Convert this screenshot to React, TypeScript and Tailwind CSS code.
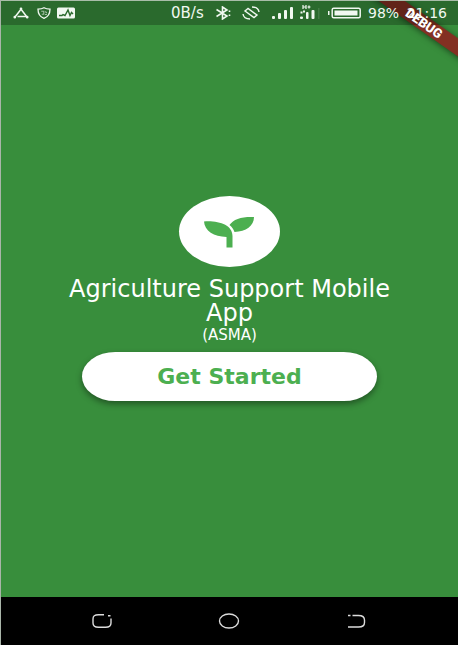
import React from "react";

function StatusBar() {
  return (
    <header className="absolute inset-x-0 top-0 z-10 flex h-[25px] items-center border-t border-[#a9bda9] bg-black/25 pl-3 pr-[11px] text-[14px] leading-4 text-[#f1f8f1]">
      <div className="flex items-center gap-2">
        <svg width="16" height="12" viewBox="0 0 16 12" fill="none" stroke="currentColor" strokeWidth="1.5">
          <path d="M2 10 8 2.2 14 10M4.5 9.6h8.5" />
          <circle cx="8" cy="1.8" r="0.6" fill="currentColor" />
          <circle cx="1.8" cy="10.2" r="0.6" fill="currentColor" />
          <circle cx="14.2" cy="10.2" r="0.6" fill="currentColor" />
        </svg>
        <svg width="14" height="12" viewBox="0 0 14 12" fill="none" stroke="currentColor">
          <path d="M7 .8C5 2 3 2.2 1 2.2c0 4.3 1.3 7.3 6 9.1 4.7-1.8 6-4.8 6-9.1-2 0-4-.2-6-1.4Z" strokeWidth="1.3" />
          <path d="M4.2 4.2h2.6v3H4.8M8.3 4.5l1.5 1.5M8 7.5h2" strokeWidth="1.1" opacity=".6" />
        </svg>
        <svg width="18" height="12" viewBox="0 0 18 12" className="-ml-0.5">
          <rect y="0.5" width="18" height="11" rx="1.5" fill="currentColor" />
          <path d="M2 8.5h3l1-1 2 1L11 3l2 5.500 1.500-3L16 7" fill="none" stroke="#2a6a2d" strokeWidth="1.4" />
        </svg>
      </div>
      <div className="ml-auto flex items-center">
        <span className="w-[44px] text-[15px]">0B/s</span>
        <svg className="mr-[10px]" width="17" height="14" viewBox="0 0 17 14" fill="none" stroke="currentColor" strokeWidth="1.6">
          <path d="M1.5 3.5 12 10 7.500 13V1L12 4 1.500 10.500" />
          <path d="M14.500 4.500v1.500M14.500 8.500V10" />
        </svg>
        <svg className="mr-[12px]" width="18" height="14" viewBox="0 0 18 14" fill="none" stroke="currentColor" strokeWidth="1.4">
          <path d="M6 2.500 3 5l9 6.500L15 9Z" />
          <path d="M10 1C13.500 1 16.500 2.500 17 6M8 13C4.500 13 1.500 11.500 1 8" />
        </svg>
        <svg className="mr-[5px]" width="22" height="14" viewBox="0 0 22 14" fill="currentColor">
          <rect x="0" y="10" width="3" height="3" rx="1" />
          <rect x="6" y="7" width="3" height="6" rx="1" />
          <rect x="12" y="4" width="3" height="9" rx="1" />
          <rect x="18" y="1" width="3" height="12" rx="1" />
        </svg>
        <svg className="mr-[7px]" width="22" height="18" viewBox="0 0 22 18" fill="currentColor">
          <path d="M4 1v4M7 1v4M4 3h3M8.500 3h3M10 1.500v3" stroke="currentColor" strokeWidth="1.2" />
          <rect x="1" y="12.5" width="3" height="2.5" rx="1" />
          <rect x="1.5" y="7.5" width="2" height="2" />
          <rect x="4" y="6.5" width="2" height="2" />
          <rect x="7" y="8" width="2.5" height="7" rx="1" />
          <rect x="12.5" y="6" width="3" height="9" rx="1" />
          <rect x="19" y="4" width="1.5" height="11" opacity=".12" />
        </svg>
        <svg className="mr-[7px]" width="33" height="12" viewBox="0 0 33 12">
          <rect x="0" y="4" width="1.5" height="4" fill="currentColor" />
          <rect x="4.2" y="1.2" width="28" height="9.6" rx="1.5" fill="none" stroke="currentColor" strokeWidth="1.5" />
          <rect x="6.5" y="3.5" width="23" height="5" fill="currentColor" />
        </svg>
        <span className="w-[36px]">98%</span>
        <span className="w-[43px] text-right">21:16</span>
      </div>
    </header>
  );
}

function DebugBanner() {
  return (
    <>
      <div className="absolute right-0 top-0 h-20 w-28 overflow-hidden">
        <div className="absolute -right-[36px] top-[16px] h-[15px] w-[140px] rotate-[35deg] bg-[#833022] shadow-[0_1px_6px_rgba(0,0,0,0.5)]" />
      </div>
      <div className="pointer-events-none absolute right-0 top-0 z-20 h-20 w-28 overflow-hidden">
        <div className="absolute -right-[36px] top-[16px] flex h-[15px] w-[140px] rotate-[35deg] items-center justify-center font-['Roboto',sans-serif] text-[13px] font-black leading-none text-white">
          DEBUG
        </div>
      </div>
    </>
  );
}

function Sprout() {
  return (
    <svg width="52" height="32" viewBox="0 0 52 32" fill="#4caf50">
      <path d="M0 5.500C15 4.500 28.500 9 28.500 20v11.500h-6V21C10 20.500 .5 15 0 5.500Z" />
      <path d="M50 1C38 .5 29.500 3 25.500 9c2.500 2 4 4 5 7C42 15.500 50 10 50 1Z" />
    </svg>
  );
}

function NavBar() {
  return (
    <nav className="flex h-12 items-center justify-center gap-[103px] bg-black pr-[2px] text-[#dcdcdc]">
      <button type="button" aria-label="Recent apps">
        <svg width="24" height="18" viewBox="0 0 24 18" fill="none" stroke="currentColor" strokeWidth="1.4">
          <path d="M14 2.700H8.500C4.500 2.700 3 4.200 3 7v4c0 3 1.500 4.300 5.500 4.300h7c4 0 5.500-1.300 5.500-4.300V6.500M18 3.800h2.500" />
        </svg>
      </button>
      <button type="button" aria-label="Home">
        <svg width="24" height="18" viewBox="0 0 24 18" fill="none" stroke="currentColor" strokeWidth="1.4">
          <ellipse cx="12" cy="9" rx="9.5" ry="7" />
        </svg>
      </button>
      <button type="button" aria-label="Back">
        <svg width="24" height="18" viewBox="0 0 24 18" fill="none" stroke="currentColor" strokeWidth="1.4">
          <path d="M4 3.500h2.500M8.500 3.500h6c4.500 0 6 1.500 6 4.500v2.500c0 3-1.500 4.500-6 4.500H4" />
        </svg>
      </button>
    </nav>
  );
}

export default function App() {
  return (
    <div className="relative flex min-h-screen flex-col border-l border-[#a9b5a9] bg-[#388e3c] font-['DejaVu_Sans',sans-serif]">
      <DebugBanner />
      <StatusBar />
      <main className="flex flex-1 flex-col items-center justify-center px-12 text-center text-white">
        <div className="flex h-[71px] w-[101px] items-center justify-center rounded-[50%] bg-white">
          <Sprout />
        </div>
        <h1 className="mt-[10px] text-[24px] leading-6">Agriculture Support Mobile App</h1>
        <p className="text-[15px] leading-5">(ASMA)</p>
        <button
          type="button"
          className="mt-[7px] h-[49px] w-[295px] max-w-full rounded-[34px/25px] bg-white text-[22px] font-bold text-[#4caf50] shadow-[0_3px_6px_rgba(0,0,0,0.4)]"
        >
          Get Started
        </button>
      </main>
      <NavBar />
    </div>
  );
}
